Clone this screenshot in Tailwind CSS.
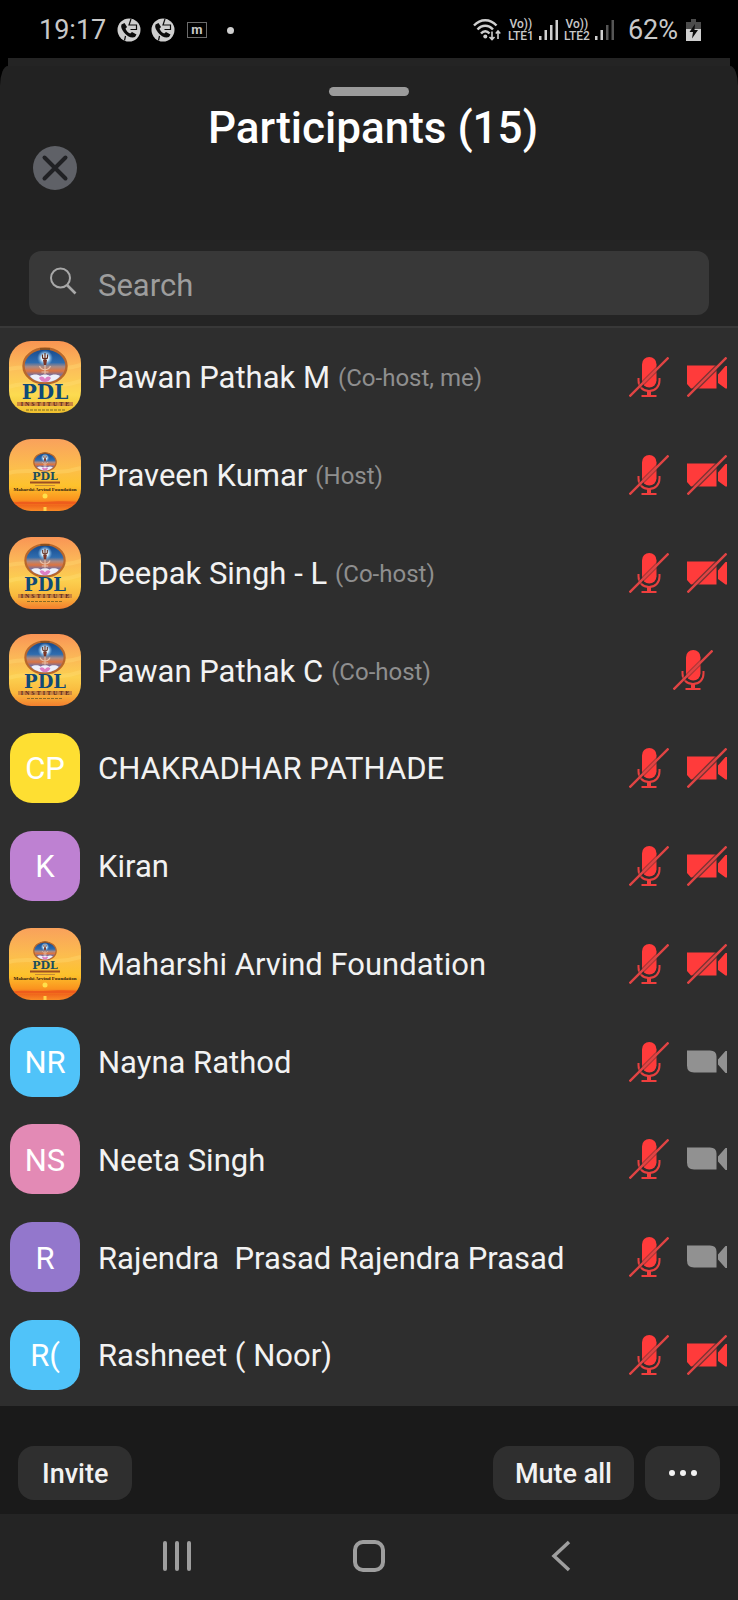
<!DOCTYPE html>
<html lang="en">
<head>
<meta charset="utf-8">
<meta name="viewport" content="width=device-width, initial-scale=1">
<title>Participants</title>
<script src="https://cdn.jsdelivr.net/npm/@tailwindcss/browser@4"></script>
</head>
<body class="bg-black font-[Roboto,sans-serif] text-[#f2f2f2]">

<!-- Shared symbols -->
<svg width="0" height="0" class="absolute" aria-hidden="true">
  <defs>
    <linearGradient id="sunset" x1="0" y1="0" x2="0" y2="1">
      <stop offset="0" stop-color="#f99455"/><stop offset=".3" stop-color="#fbb558"/><stop offset=".6" stop-color="#fcd050"/><stop offset=".82" stop-color="#f9b83c"/><stop offset="1" stop-color="#f37f2e"/>
    </linearGradient>
    <linearGradient id="golden" x1="0" y1="0" x2="0" y2="1">
      <stop offset="0" stop-color="#f99452"/><stop offset=".4" stop-color="#fcc05a"/><stop offset=".75" stop-color="#fcdb50"/><stop offset="1" stop-color="#f0c02e"/>
    </linearGradient>
    <linearGradient id="shore" x1="0" y1="0" x2="0" y2="1">
      <stop offset="0" stop-color="#f9a15c"/><stop offset=".4" stop-color="#fcbe4d"/><stop offset=".65" stop-color="#fdc22c"/><stop offset=".84" stop-color="#fb941f"/><stop offset=".92" stop-color="#f0661c"/><stop offset="1" stop-color="#f98a25"/>
    </linearGradient>
    <linearGradient id="sky" x1="0" y1="0" x2="0" y2="1">
      <stop offset="0" stop-color="#15488c"/><stop offset=".4" stop-color="#2f6cae"/><stop offset=".52" stop-color="#a88a86"/><stop offset=".64" stop-color="#dd7440"/><stop offset=".75" stop-color="#7d6f96"/><stop offset="1" stop-color="#b9bfdc"/>
    </linearGradient>
    <radialGradient id="halo"><stop offset="0" stop-color="#fff"/><stop offset=".45" stop-color="#d8efff"/><stop offset="1" stop-color="#6fb4e6" stop-opacity="0"/></radialGradient>
    <symbol id="emblem" viewBox="0 0 46 38">
      <ellipse cx="23" cy="19" rx="21.500" ry="17.500" fill="url(#sky)" stroke="#b8672b" stroke-width="2.400"/>
      <circle cx="23" cy="11" r="8" fill="url(#halo)"/>
      <path d="M20.500 7.500v2.500c0 1.500 1 2 2.500 2s2.500-.5 2.500-2V7.500M23 6v10" fill="none" stroke="#5e2a1c" stroke-width="1.200"/>
      <path d="M21 13h4l-.8 5h-2.400z" fill="#7a3525"/>
      <path d="M17.500 19c2 5 9 5 11 0M23 18v9M19.500 25h7" fill="none" stroke="#e9c0a6" stroke-width="1.200"/>
      <path d="M8 29c3-2 8-2 10 0 3-2 7-2 10 0 2-2 7-2 10 0-3 4-9 6-15 6S11 33 8 29z" fill="#eef0fa"/>
      <path d="M17 31c2-2 4-2 6 1 2-3 4-3 6-1-2 3-3 4-6 4s-4-1-6-4z" fill="#dd7fc4"/>
      <path d="M18 2h10" stroke="#7b4a1f" stroke-width="1.600"/>
    </symbol>
    <symbol id="logo-large" viewBox="0 0 72 72">
      <rect width="72" height="72" fill="url(#golden)"/>
      <path d="M0 46c20-8 44 4 72-6M0 28c26-6 46 5 72-4" stroke="#ffe27a" stroke-opacity=".3" stroke-width="4" fill="none"/>
      <use href="#emblem" x="13" y="6" width="46" height="38"/>
      <text x="36" y="58" text-anchor="middle" font-family="DejaVu Serif, serif" font-weight="700" font-size="20" fill="#104a77">PDL</text>
      <rect x="8" y="61" width="56" height="4" fill="#c98540"/>
      <text x="37" y="65" text-anchor="middle" font-family="Liberation Serif, serif" font-weight="700" font-size="6" letter-spacing="2" fill="#5d2417">INSTITUTE</text>
      <path d="M17 69h39" stroke="#7a6a25" stroke-width="1.200" stroke-dasharray="3 1"/>
    </symbol>
    <symbol id="logo-medium" viewBox="0 0 72 72">
      <rect width="72" height="72" fill="url(#sunset)"/>
      <path d="M0 44c20-8 44 4 72-6M0 28c26-6 46 5 72-4" stroke="#ffe27a" stroke-opacity=".3" stroke-width="4" fill="none"/>
      <use href="#emblem" x="15" y="6" width="42" height="35"/>
      <text x="36" y="54" text-anchor="middle" font-family="DejaVu Serif, serif" font-weight="700" font-size="18" fill="#104a77">PDL</text>
      <rect x="9" y="57" width="54" height="4" fill="#c98540"/>
      <text x="37" y="61" text-anchor="middle" font-family="Liberation Serif, serif" font-weight="700" font-size="6" letter-spacing="2" fill="#5d2417">INSTITUTE</text>
      <path d="M18 64.500h36" stroke="#8a6a25" stroke-width="1" stroke-dasharray="3 1"/>
    </symbol>
    <symbol id="logo-small" viewBox="0 0 72 72">
      <rect width="72" height="72" fill="url(#shore)"/>
      <path d="M0 34c20-6 44 4 72-5" stroke="#ffe07a" stroke-opacity=".3" stroke-width="4" fill="none"/>
      <circle cx="36" cy="57" r="2.500" fill="#ffe04b"/>
      <path d="M0 64c12-2 22-1 34-1 14-1 26-1 38 0v2H0z" fill="#ee5c1c"/>
      <path d="M34.500 68h3v4h-3z" fill="#fdd24a"/>
      <use href="#emblem" x="24" y="13" width="24" height="20"/>
      <text x="36" y="41" text-anchor="middle" font-family="DejaVu Serif, serif" font-weight="700" font-size="11" fill="#1c4f5c">PDL</text>
      <path d="M21 43.500h30" stroke="#9c4f22" stroke-width="2"/>
      <path d="M26 46.500h20" stroke="#c58a35" stroke-width="1"/>
      <text x="36" y="52" text-anchor="middle" font-family="Liberation Serif, serif" font-weight="700" font-size="5" fill="#2d1a10">Maharshi Arvind Foundation</text>
    </symbol>
    <symbol id="mic-off" viewBox="0 0 40 40">
      <rect x="13" y="0" width="14.500" height="30.500" rx="7.250" fill="#ff3b3b"/>
      <path d="M9.500 21v2.500c0 6 4 10.500 10.500 10.500s10.500-4.500 10.500-10.500V21" fill="none" stroke="#e8403f" stroke-width="2"/>
      <path d="M20 34v5" stroke="#f03e3d" stroke-width="4"/>
      <path d="M12.500 39h15" stroke="#f03e3d" stroke-width="2"/>
      <path d="M.5 39.500 39.500 .5" stroke="#2e2e2e" stroke-opacity=".4" stroke-width="4.500"/>
      <path d="M.5 39.500 39.500 .5" stroke="#e04444" stroke-width="2.400"/>
    </symbol>
    <symbol id="camera" viewBox="0 0 40 40">
      <path d="M0 8.500h23q6.500 0 6.500 6v16H7q-7 0-7-7zM31 17.500 38.500 9H41v22h-2.500L31 22.500z" fill="#919191"/>
    </symbol>
    <symbol id="camera-off" viewBox="0 0 40 40">
      <path d="M0 8.500h29.500v23H4L0 27zM31 17.500 38.500 9H41v22.500h-2.500L31 26z" fill="#ff3b3b"/>
      <path d="M.5 39.500 39.500 .5" stroke="#2e2e2e" stroke-opacity=".65" stroke-width="5"/>
      <path d="M.5 39.500 39.500 .5" stroke="#e04444" stroke-width="2.400"/>
    </symbol>
    <symbol id="call" viewBox="0 0 24 24">
      <circle cx="12" cy="12" r="11.500" fill="#cfcfcf"/>
      <path d="M4.500 6.500 7.500 5l2.500 4-1.500 1.800c1 2.300 2.500 3.800 4.700 4.700l1.800-1.500 4.500 2.500-1.500 2.500c-3 1.500-8-.5-11-4.500C4.800 11.500 3.500 9 4.500 6.500z" fill="#0b0b0b"/>
      <path d="M14 1 12 7h7.500v4.500h-6M8.500 18 7.500 22.500" fill="none" stroke="#0b0b0b" stroke-width="1.200"/>
    </symbol>
  </defs>
</svg>

<div class="flex min-h-screen flex-col">

  <!-- System status bar -->
  <div class="flex h-[58px] items-center justify-between pl-[39px] pr-[37px] pt-0.5 text-[27px] text-[#c8c8c8]">
    <div class="flex items-center">
      <span class="w-[78px]">19:17</span>
      <svg class="size-6" aria-hidden="true"><use href="#call"/></svg>
      <svg class="ml-[10px] size-6" aria-hidden="true"><use href="#call"/></svg>
      <span class="ml-3 flex h-4 w-5 items-center justify-center border border-[#6b6b6b] pb-px text-[13px] font-bold leading-none">m</span>
      <span class="ml-5 size-[7px] rounded-full bg-[#cfcfcf]"></span>
    </div>
    <div class="flex items-center">
      <svg class="h-6 w-7" viewBox="0 0 28 24" fill="none" stroke="#cfcfcf" stroke-width="2.400" aria-label="Wi-Fi">
        <path d="M1 7.500C7.500.5 17 .5 23.500 7.500M4.500 11.500c4.500-5 11-5 15.500 0M8 15.500c2.500-3 6-3 8.500 0"/>
        <circle cx="12.300" cy="18.500" r="2" fill="#cfcfcf" stroke="none"/>
        <path d="M19 13.500v8M16.500 19l2.500 2.500 2.500-2.500M25 21v-8M22.800 15.500 25 13l2.300 2.500" stroke-width="1.600"/>
      </svg>
      <span class="ml-[6px] flex w-7 flex-col items-center text-[12px] font-medium leading-3"><span>Vo))</span><span>LTE1</span></span>
      <svg class="ml-1 h-[22px] w-5" viewBox="0 0 20 22" fill="#cfcfcf" aria-hidden="true"><path d="M0 17h2.500v4H0zM5.500 11H8v10H5.500zM11 6h2.500v15H11zM16.500 1H19v20h-2.500z"/></svg>
      <span class="ml-1 flex w-7 flex-col items-center text-[12px] font-medium leading-3"><span>Vo))</span><span>LTE2</span></span>
      <svg class="ml-1 h-[22px] w-5" viewBox="0 0 20 22" fill="#cfcfcf" aria-hidden="true"><path d="M0 17h2.500v4H0zM5.500 11H8v10H5.500z"/><path fill="#555" d="M11 6h2.500v15H11zM16.500 1H19v20h-2.500z"/></svg>
      <span class="ml-[13px]">62%</span>
      <svg class="ml-2 h-[22px] w-[15px]" viewBox="0 0 15 22" aria-label="Battery charging"><path fill="#4c4c4c" d="M5 0h5v3h5v7H0V3h5z"/><path fill="#cfcfcf" d="M0 10h15v12H0z"/><path fill="#0b0b0b" d="M9 5 3.500 13H7l-1 6.500L12 11H8.500z"/></svg>
    </div>
  </div>

  <!-- Bottom sheet -->
  <div class="mx-2 h-2 bg-[#242424]"></div>
  <main class="flex flex-1 flex-col bg-[#222222] [border-radius:8px_8px_0_0/20px_20px_0_0]">
    <div class="mx-auto mt-[21px] h-[9px] w-20 rounded-full bg-[#9b9b9b]"></div>
    <header class="grid h-36 grid-cols-[1fr_auto_1fr] items-start px-[33px] pt-[6px]">
      <button type="button" aria-label="Close" class="mt-11 size-11">
        <svg class="size-11" viewBox="0 0 44 44" aria-hidden="true"><circle cx="22" cy="22" r="22" fill="#5f6167"/><path d="M11.500 11.500l21 21M32.500 11.500l-21 21" stroke="#202124" stroke-width="4" stroke-linecap="round"/></svg>
      </button>
      <h1 class="pl-2 text-[44px] font-medium leading-[52px] text-white">Participants (15)</h1>
    </header>
    <div class="border-b-2 border-[#383838] bg-[#242424] px-[29px] py-[11px]">
      <label class="flex h-16 items-center rounded-xl bg-[#383838] pl-[21px]">
        <svg class="mb-1 size-7 shrink-0" viewBox="0 0 28 28" fill="none" stroke="#a8a8a8" stroke-width="2" aria-hidden="true"><circle cx="10.500" cy="11" r="9.500"/><path d="M17 18l8.500 8.500" stroke-width="2.600"/></svg>
        <span class="sr-only">Search participants</span>
        <input type="text" placeholder="Search" class="ml-4 h-full min-w-0 flex-1 bg-transparent pl-1 pt-1 text-[31px] text-white outline-none placeholder:text-[#9d9d9d]">
      </label>
    </div>

    <ul class="grid flex-1 auto-rows-fr bg-[#2e2e2e] pb-0.5 text-[31px]">
      <li class="flex items-center pl-[9px] pr-[11px]">
        <svg class="size-[72px] shrink-0 rounded-[22px]" role="img" aria-label="PDL Institute"><use href="#logo-large"/></svg>
        <p class="ml-[17px] flex flex-1 items-center gap-2 pt-[3px]">Pawan Pathak M <span class="text-2xl text-[#8f8f8f]">(Co-host, me)</span></p>
        <svg class="size-10" role="img" aria-label="Muted"><use href="#mic-off"/></svg>
        <svg class="ml-[18px] size-10" role="img" aria-label="Video off"><use href="#camera-off"/></svg>
      </li>
      <li class="flex items-center pl-[9px] pr-[11px]">
        <svg class="size-[72px] shrink-0 rounded-[22px]" role="img" aria-label="PDL Maharshi Arvind Foundation"><use href="#logo-small"/></svg>
        <p class="ml-[17px] flex flex-1 items-center gap-2 pt-[3px]">Praveen Kumar <span class="text-2xl text-[#8f8f8f]">(Host)</span></p>
        <svg class="size-10" role="img" aria-label="Muted"><use href="#mic-off"/></svg>
        <svg class="ml-[18px] size-10" role="img" aria-label="Video off"><use href="#camera-off"/></svg>
      </li>
      <li class="flex items-center pl-[9px] pr-[11px]">
        <svg class="size-[72px] shrink-0 rounded-[22px]" role="img" aria-label="PDL Institute"><use href="#logo-medium"/></svg>
        <p class="ml-[17px] flex flex-1 items-center gap-2 pt-[3px]">Deepak Singh - L <span class="text-2xl text-[#8f8f8f]">(Co-host)</span></p>
        <svg class="size-10" role="img" aria-label="Muted"><use href="#mic-off"/></svg>
        <svg class="ml-[18px] size-10" role="img" aria-label="Video off"><use href="#camera-off"/></svg>
      </li>
      <li class="flex items-center pl-[9px] pr-[25px]">
        <svg class="size-[72px] shrink-0 rounded-[22px]" role="img" aria-label="PDL Institute"><use href="#logo-medium"/></svg>
        <p class="ml-[17px] flex flex-1 items-center gap-2 pt-[3px]">Pawan Pathak C <span class="text-2xl text-[#8f8f8f]">(Co-host)</span></p>
        <svg class="size-10" role="img" aria-label="Muted"><use href="#mic-off"/></svg>
      </li>
      <li class="flex items-center pl-[10px] pr-[11px]">
        <span class="flex size-[70px] shrink-0 items-center justify-center rounded-[22px] bg-[#fedf32] pt-[3px] text-white">CP</span>
        <p class="ml-[18px] flex-1 pt-[3px]">CHAKRADHAR PATHADE</p>
        <svg class="size-10" role="img" aria-label="Muted"><use href="#mic-off"/></svg>
        <svg class="ml-[18px] size-10" role="img" aria-label="Video off"><use href="#camera-off"/></svg>
      </li>
      <li class="flex items-center pl-[10px] pr-[11px]">
        <span class="flex size-[70px] shrink-0 items-center justify-center rounded-[22px] bg-[#be81d2] pt-[3px] text-white">K</span>
        <p class="ml-[18px] flex-1 pt-[3px]">Kiran</p>
        <svg class="size-10" role="img" aria-label="Muted"><use href="#mic-off"/></svg>
        <svg class="ml-[18px] size-10" role="img" aria-label="Video off"><use href="#camera-off"/></svg>
      </li>
      <li class="flex items-center pl-[9px] pr-[11px]">
        <svg class="size-[72px] shrink-0 rounded-[22px]" role="img" aria-label="PDL Maharshi Arvind Foundation"><use href="#logo-small"/></svg>
        <p class="ml-[17px] flex-1 pt-[3px]">Maharshi Arvind Foundation</p>
        <svg class="size-10" role="img" aria-label="Muted"><use href="#mic-off"/></svg>
        <svg class="ml-[18px] size-10" role="img" aria-label="Video off"><use href="#camera-off"/></svg>
      </li>
      <li class="flex items-center pl-[10px] pr-[11px]">
        <span class="flex size-[70px] shrink-0 items-center justify-center rounded-[22px] bg-[#50c3f9] pt-[3px] text-white">NR</span>
        <p class="ml-[18px] flex-1 pt-[3px]">Nayna Rathod</p>
        <svg class="size-10" role="img" aria-label="Muted"><use href="#mic-off"/></svg>
        <svg class="ml-[18px] size-10" role="img" aria-label="Video on"><use href="#camera"/></svg>
      </li>
      <li class="flex items-center pl-[10px] pr-[11px]">
        <span class="flex size-[70px] shrink-0 items-center justify-center rounded-[22px] bg-[#e38ab5] pt-[3px] text-white">NS</span>
        <p class="ml-[18px] flex-1 pt-[3px]">Neeta Singh</p>
        <svg class="size-10" role="img" aria-label="Muted"><use href="#mic-off"/></svg>
        <svg class="ml-[18px] size-10" role="img" aria-label="Video on"><use href="#camera"/></svg>
      </li>
      <li class="flex items-center pl-[10px] pr-[11px]">
        <span class="flex size-[70px] shrink-0 items-center justify-center rounded-[22px] bg-[#9377cc] pt-[3px] text-white">R</span>
        <p class="ml-[18px] flex-1 whitespace-pre pt-[3px]">Rajendra  Prasad Rajendra Prasad</p>
        <svg class="size-10" role="img" aria-label="Muted"><use href="#mic-off"/></svg>
        <svg class="ml-[18px] size-10" role="img" aria-label="Video on"><use href="#camera"/></svg>
      </li>
      <li class="flex items-center pl-[10px] pr-[11px]">
        <span class="flex size-[70px] shrink-0 items-center justify-center rounded-[22px] bg-[#50c3f9] pt-[3px] text-white">R(</span>
        <p class="ml-[18px] flex-1 pt-[3px]">Rashneet ( Noor)</p>
        <svg class="size-10" role="img" aria-label="Muted"><use href="#mic-off"/></svg>
        <svg class="ml-[18px] size-10" role="img" aria-label="Video off"><use href="#camera-off"/></svg>
      </li>
    </ul>

    <footer class="flex bg-[#1a1a1a] px-[18px] pb-[14px] pt-10 text-[27px] font-medium">
      <button type="button" class="h-[54px] rounded-2xl bg-[#2f2f2f] px-6 pt-[3px]">Invite</button>
      <button type="button" class="ml-auto h-[54px] rounded-2xl bg-[#2f2f2f] px-[22px] pt-[3px]">Mute all</button>
      <button type="button" aria-label="More options" class="ml-[11px] flex h-[54px] w-[75px] items-center justify-center gap-[5px] rounded-2xl bg-[#2f2f2f]">
        <span class="size-[6px] rounded-full bg-[#f2f2f2]"></span><span class="size-[6px] rounded-full bg-[#f2f2f2]"></span><span class="size-[6px] rounded-full bg-[#f2f2f2]"></span>
      </button>
    </footer>
  </main>

  <!-- System navigation bar -->
  <nav class="grid h-[86px] grid-cols-3 items-center justify-items-center bg-[#242424] px-[81px] pb-0.5">
    <button type="button" aria-label="Recent apps"><svg class="size-8" viewBox="0 0 32 32" stroke="#9e9e9e" stroke-width="4" stroke-linecap="round" aria-hidden="true"><path d="M4 3v26M16 3v26M28 3v26"/></svg></button>
    <button type="button" aria-label="Home"><svg class="size-8" viewBox="0 0 32 32" fill="none" stroke="#9e9e9e" stroke-width="4" aria-hidden="true"><rect x="2" y="2" width="28" height="28" rx="8"/></svg></button>
    <button type="button" aria-label="Back"><svg class="size-8" viewBox="0 0 32 32" fill="none" stroke="#9e9e9e" stroke-width="3.500" aria-hidden="true"><path d="M24 2 9 16l15 14"/></svg></button>
  </nav>
</div>
</body>
</html>
